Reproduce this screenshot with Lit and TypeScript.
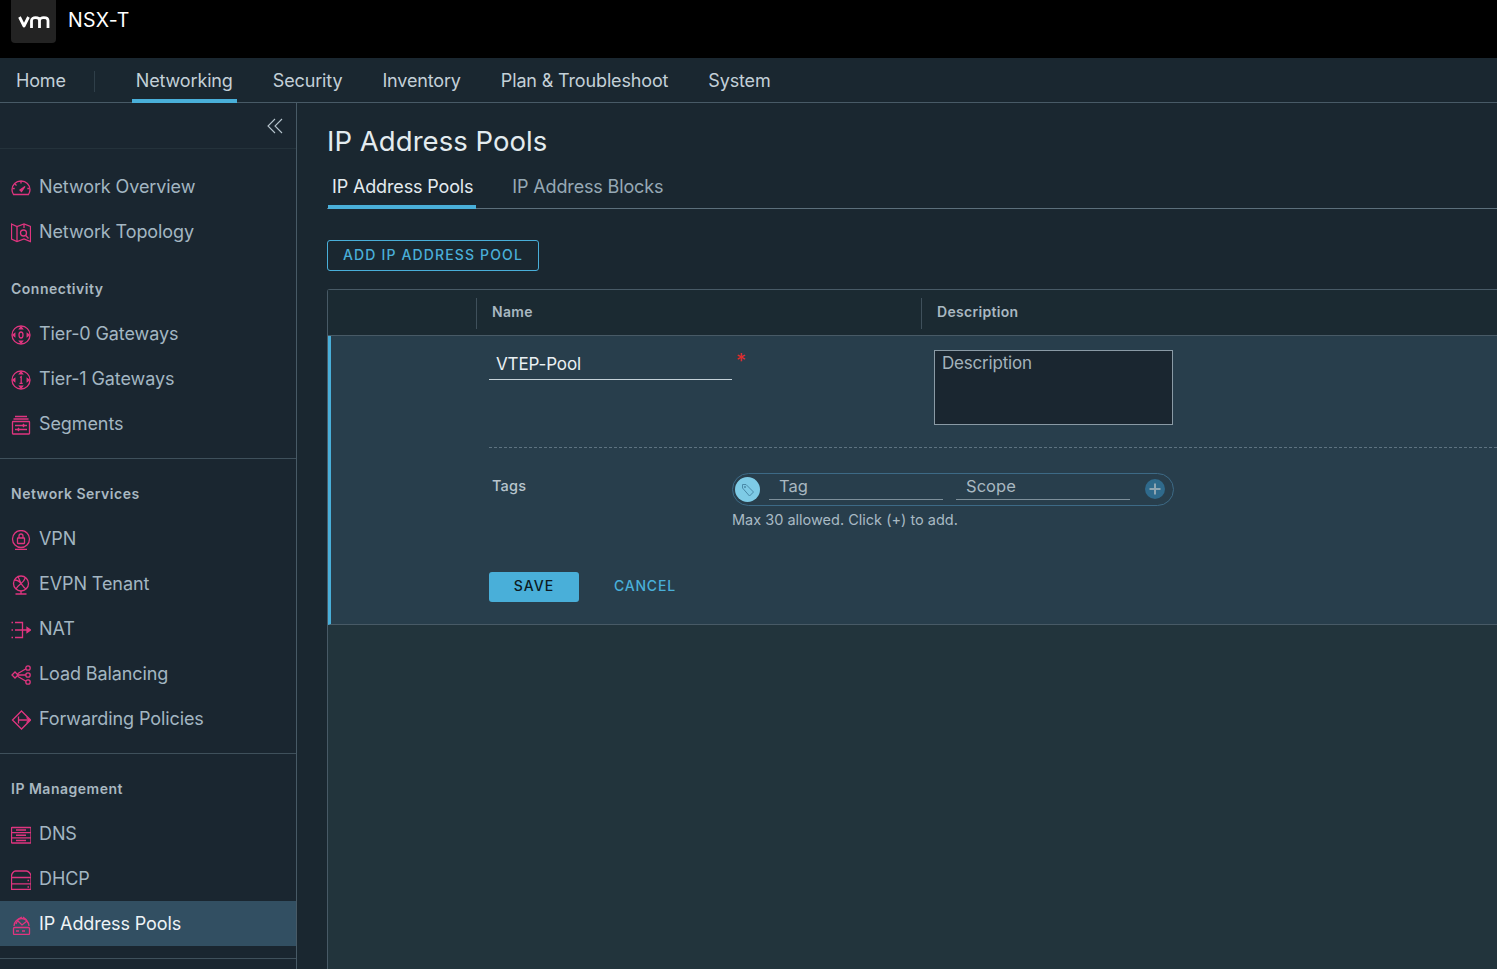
import { LitElement, html, css, svg } from "lit";
import { customElement } from "lit/decorators.js";

const icons: Record<string, any> = {
  gauge: svg`<path d="M2.500 16.500C1.500 15 1 13.500 1 11.800 1 6.500 5 3 10 3s9 3.500 9 8.800c0 1.700-.5 3.200-1.500 4.700z"/><path d="M10 3v2.500M1.500 10.500h2.200M16.300 10.500h2.200M4 6l1.500 1.500"/><path d="M9 12l5-3.500-3.500 5z" fill="currentColor"/>`,
  topo: svg`<path d="M.5 1l5.500 2.500 7-2.500 6.500 2.500v15l-6.500-2.500-7 2.500-5.500-2.500z"/><path d="M6 3.500v15M13 1v4"/><circle cx="12.500" cy="10" r="3"/><path d="M14.500 12.300l3 3.200"/>`,
  tier0: svg`<circle cx="10" cy="10" r="9"/><ellipse cx="10" cy="10" rx="2" ry="3"/><path d="M10 1.800l-1.500 2h3zM10 18.200l-1.500-2h3zM1.800 10l2-1.500v3zM18.200 10l-2-1.500v3z" fill="currentColor"/>`,
  tier1: svg`<circle cx="10" cy="10" r="9"/><path d="M9 7.500l1.200-.8v6.600M8.500 13.300h3.200"/><path d="M10 1.800l-1.500 2h3zM10 18.200l-1.500-2h3zM1.800 10l2-1.500v3zM18.200 10l-2-1.500v3z" fill="currentColor"/>`,
  seg: svg`<path d="M4 1.500h12M2.500 4h15"/><rect x="1.500" y="6.500" width="17" height="12.500" rx=".5"/><path d="M4 10.500h12M16 14.500H4M12 9l1.500 1.500L12 12M8 13l-1.500 1.500L8 16"/>`,
  vpn: svg`<circle cx="10" cy="9" r="8.500"/><rect x="6.500" y="8" width="7" height="5.500" rx=".5"/><path d="M8 8V6a2 2 0 0 1 4 0v2M4 19.500h12"/>`,
  evpn: svg`<circle cx="10" cy="8.500" r="7.500"/><path d="M3.500 5c3 0 5 1.500 6.500 3.500s3 4.500 5 5.500M14.500 2.500c-1 3-3 5-5 6.500s-3.500 3-4.500 5M7 1.500c1 2 1.500 4 3 7"/><path d="M4.500 19h11M10 16v3"/>`,
  nat: svg`<path d="M.5 2.500h1.500M4 2.500h7.500v15H4M.5 17.500H2M.5 10H2M4 10h15"/><path d="M16 7.500l3.500 2.500-3.500 2.500z" fill="currentColor"/>`,
  lb: svg`<path d="M1 10l3-3 3 3-3 3z"/><circle cx="17" cy="3" r="2.200"/><circle cx="17" cy="10" r="2.200"/><circle cx="17" cy="17" r="2.200"/><path d="M6.500 8.800l8.500-5M7 10h7.800M6.500 11.200l8.500 5"/>`,
  fwd: svg`<path d="M10.500 1l9 9-9 9-9-9z"/><path d="M7.500 6.500v7M7.500 10h11.500M15.500 7.500l3.500 2.500-3.500 2.500"/>`,
  dns: svg`<rect x=".5" y="2.500" width="19.500" height="15.500" rx=".5"/><path d="M.5 7.700h19.500M.5 12.900h19.500"/><path d="M5 5h10M5 10.300h10M5 15.500h10" stroke-width="1.600"/>`,
  dhcp: svg`<path d="M.5 6c0-2 2-5 4-5h11c2 0 4.500 3 4.500 5v13.500H.5z"/><path d="M.5 7.500h19.500M.5 13.800h19.500"/><path d="M16.500 10.500h1.500M16.500 17h1.500"/>`,
  ip: svg`<path d="M3 11a7.500 7.500 0 1 1 15 0"/><path d="M5 9c1-3 3-6 6-7M12 2c2 1 4 3 5 6M6 5l5 5 5-4"/><rect x="2.500" y="12.500" width="16" height="7" rx="1"/><path d="M5 16h3M11 16h3"/>`,
};

const sections = [
  { items: [["gauge", "Network Overview"], ["topo", "Network Topology"]] },
  { label: "Connectivity", items: [["tier0", "Tier-0 Gateways"], ["tier1", "Tier-1 Gateways"], ["seg", "Segments"]] },
  { label: "Network Services", items: [["vpn", "VPN"], ["evpn", "EVPN Tenant"], ["nat", "NAT"], ["lb", "Load Balancing"], ["fwd", "Forwarding Policies"]] },
  { label: "IP Management", items: [["dns", "DNS"], ["dhcp", "DHCP"], ["ip", "IP Address Pools"]] },
];

@customElement("app-root")
export class AppRoot extends LitElement {
  static styles = css`
    :host { display: block; height: 969px; overflow: hidden; background: #1a2730; color: #adbbc4;
      font-family: "Inter", "Noto Sans", sans-serif; font-size: 18px; }
    * { box-sizing: border-box; }
    .top { height: 58px; background: #000; display: flex; align-items: flex-start; padding-left: 11px; }
    .logo { width: 45px; height: 43px; background: #232323; border-radius: 0 0 4px 4px; display: flex; align-items: center; justify-content: center; }
    .logo svg { margin-top: 1px; }
    .brand { margin: 8px 0 0 12px; font-size: 19.500px; line-height: 24px; color: #fff; letter-spacing: .4px; }
    .nav { height: 45px; display: flex; border-bottom: 1px solid #485a66; background: #1a2730; }
    .nav a { height: 45px; line-height: 46px; color: #c3d0d8; font-size: 18px; letter-spacing: -.15px; white-space: nowrap; }
    .home { padding: 0 29px 0 16px; position: relative; }
    .home::after { content: ""; position: absolute; right: 0; top: 13px; height: 21px; width: 1px; background: #2f3f49; }
    .nav .net { margin-left: 37px; padding: 0 4px; width: 105px; border-bottom: 4px solid #49afd9; }
    .nav .it { margin-left: 40px; }
    .nav .first { margin-left: 36px; }
    .body { display: flex; height: 866px; }
    .side { width: 297px; flex: none; border-right: 1px solid #485a66; background: #1a2630; overflow: hidden; }
    .coll { height: 46px; border-bottom: 1px solid #24323b; display: flex; justify-content: flex-end; align-items: center; padding: 0 13px 0 0; color: #b6c4cd; }
    .sec { border-bottom: 1px solid #3f505b; padding-bottom: 12px; }
    .sec.first { border-bottom: 0; padding: 15px 0 0; }
    .lab { height: 57px; padding: 25px 0 0 11px; line-height: 20px; font-size: 14px; font-weight: 600; color: #a9b8c1; letter-spacing: .5px; }
    .item { height: 45px; display: flex; align-items: center; padding-left: 11px; gap: 8px; color: #a3b6c2; letter-spacing: -.1px; white-space: nowrap; }
    .item.sel { background: #324f62; color: #eef3f6; }
    .item svg { width: 20px; height: 20px; flex: none; margin-top: 2px; color: #e0357f; fill: none; stroke: currentColor; stroke-width: 1.300; }
    .main { flex: 1; min-width: 0; display: flex; flex-direction: column; background: #1a2730; }
    h1 { margin: 0; padding: 21px 0 0 30px; font-size: 27.500px; line-height: 34px; font-weight: 400; color: #e3ebef; letter-spacing: .05px; height: 56px; }
    .tabs { display: flex; margin: 12px 0 0 30px; padding-left: 1px; height: 38px; border-bottom: 1px solid #5c6f7b; }
    .tab { height: 38px; padding: 4px 3px 0 4px; font-size: 18px; line-height: 24px; color: #96a9b5; letter-spacing: -.15px; white-space: nowrap; margin-right: 32px; }
    .tab.on { color: #e3ebef; border-bottom: 4px solid #49afd9; }
    .actions { margin: 31px 0 18px 30px; }
    .add { display: inline-block; width: 212px; height: 31px; border: 1px solid #49afd9; border-radius: 3px; background: none; color: #49afd9;
      font: 500 14px/27px "Inter", sans-serif; letter-spacing: 1.150px; text-align: center; padding: 0 0 2px; }
    .grid { flex: 1; margin-left: 30px; background: #22343c; border: 1px solid #485a66; border-right: 0; border-bottom: 0; border-top-left-radius: 3px; display: flex; flex-direction: column; }
    .head { height: 46px; background: #1b2a32; display: flex; font-size: 14px; font-weight: 600; color: #a9b8c1; border-bottom: 1px solid #485a66; flex: none; letter-spacing: .3px; }
    .hc { margin-top: 8px; height: 31px; border-left: 1px solid #3f505b; line-height: 27px; padding-left: 15px; }
    .hc.n { margin-left: 148px; width: 445px; }
    .row { height: 289px; flex: none; background: #283e4c; border-left: 3px solid #49afd9; border-bottom: 1px solid #485a66; padding-left: 158px; }
    .fields { display: flex; height: 112px; border-bottom: 1px dashed #5d7280; }
    .name { width: 243px; height: 30px; margin-top: 14px; margin-right: 202px; padding: 2px 0 0 7px; border-bottom: 1px solid #c5d2d9; color: #eaf0f3; line-height: 24px; font-size: 17px; letter-spacing: -.12px; position: relative; }
    .star { position: absolute; right: -14px; top: 1px; color: #e02c2c; font-size: 20px; line-height: 20px; }
    .desc { width: 239px; height: 75px; margin-top: 14px; background: #1a2630; border: 1px solid #8a9aa5; padding: 1px 7px; color: #a3b2bb; font-size: 17px; line-height: 22px; letter-spacing: -.2px; }
    .tags { display: flex; padding-top: 25px; }
    .tl { width: 243px; padding: 3px 0 0 3px; font-size: 14.500px; line-height: 20px; color: #b8c5cd; font-weight: 500; letter-spacing: .2px; }
    .pill { width: 442px; height: 33px; border: 1px solid #3d6a86; border-radius: 17px; display: flex; align-items: center; padding-left: 2px; }
    .tagc { width: 25px; height: 25px; border-radius: 50%; background: #7ecbe6; display: flex; align-items: center; justify-content: center; flex: none; }
    .tagc svg { width: 14px; height: 14px; fill: none; stroke: #4a8aa8; stroke-width: 1; }
    .ti { width: 174px; height: 24px; margin-top: -3px; border-bottom: 1px solid #7d8f9a; padding-left: 10px; font-size: 16.500px; line-height: 20px; color: #a9b8c1; letter-spacing: .05px; }
    .ti.a { margin-left: 9px; }
    .ti.b { margin-left: 13px; }
    .plus { margin-left: 15px; width: 20px; height: 20px; border-radius: 50%; background: #2f6a8c; display: flex; align-items: center; justify-content: center; margin-top: -2px; }
    .plus svg { width: 14px; height: 14px; stroke: #8fa5b2; stroke-width: 2; fill: none; }
    .help { margin: 4px 0 0 243px; font-size: 14.500px; line-height: 20px; color: #a9bac4; }
    .btns { display: flex; align-items: center; margin-top: 42px; }
    .save { width: 90px; height: 30px; background: #49afd9; border: 0; border-radius: 3px; color: #0c1a22; font: 500 14px/28px "Inter", sans-serif; letter-spacing: 1px; padding: 0 0 2px; }
    .cancel { margin: -4px 0 0 35px; color: #49afd9; font-size: 14px; font-weight: 500; letter-spacing: .8px; }
  `;

  render() {
    return html`
      <div class="top">
        <div class="logo">
          <svg width="32" height="12" viewBox="0 0 32 12" fill="none" stroke="#fff" stroke-width="2.800" stroke-linejoin="round">
            <path d="M1.500 1l4.500 9 4.500-9"/><path d="M13.500 12V4.500c0-3.800 8-3.800 8 0V12M21.500 4.500c0-3.800 8.500-3.800 8.500 0V12"/>
          </svg>
        </div>
        <div class="brand">NSX-T</div>
      </div>
      <div class="nav">
        <a class="home">Home</a>
        <a class="net">Networking</a>
        <a class="first">Security</a>
        <a class="it">Inventory</a>
        <a class="it">Plan &amp; Troubleshoot</a>
        <a class="it">System</a>
      </div>
      <div class="body">
        <aside class="side">
          <div class="coll">
            <svg width="16" height="16" viewBox="0 0 16 16" fill="none" stroke="currentColor" stroke-width="1.100"><path d="M8 1L1 8l7 7M15 1L8 8l7 7"/></svg>
          </div>
          ${sections.map((s, i) => html`
            <div class="sec ${i === 0 ? "first" : ""}">
              ${s.label ? html`<div class="lab">${s.label}</div>` : ""}
              ${s.items.map(([ic, t]) => html`
                <div class="item ${t === "IP Address Pools" ? "sel" : ""}">
                  <svg viewBox="0 0 20 20">${icons[ic]}</svg><span>${t}</span>
                </div>`)}
            </div>`)}
        </aside>
        <main class="main">
          <h1>IP Address Pools</h1>
          <div class="tabs">
            <div class="tab on">IP Address Pools</div>
            <div class="tab">IP Address Blocks</div>
          </div>
          <div class="actions"><button class="add">ADD IP ADDRESS POOL</button></div>
          <div class="grid">
            <div class="head">
              <div class="hc n">Name</div>
              <div class="hc">Description</div>
            </div>
            <div class="row">
              <div class="fields">
                <div class="name">VTEP-Pool<span class="star">*</span></div>
                <div class="desc">Description</div>
              </div>
              <div class="tags">
                <div class="tl">Tags</div>
                <div class="pill">
                  <div class="tagc"><svg viewBox="0 0 14 14"><path d="M1.500 3V1.500H5l7.500 7.500-4 4L1.500 5z"/><circle cx="4" cy="4" r=".7"/></svg></div>
                  <div class="ti a">Tag</div>
                  <div class="ti b">Scope</div>
                  <div class="plus"><svg viewBox="0 0 14 14"><path d="M7 1.500v11M1.500 7h11"/></svg></div>
                </div>
              </div>
              <div class="help">Max 30 allowed. Click (+) to add.</div>
              <div class="btns">
                <button class="save">SAVE</button>
                <span class="cancel">CANCEL</span>
              </div>
            </div>
          </div>
        </main>
      </div>
    `;
  }
}
